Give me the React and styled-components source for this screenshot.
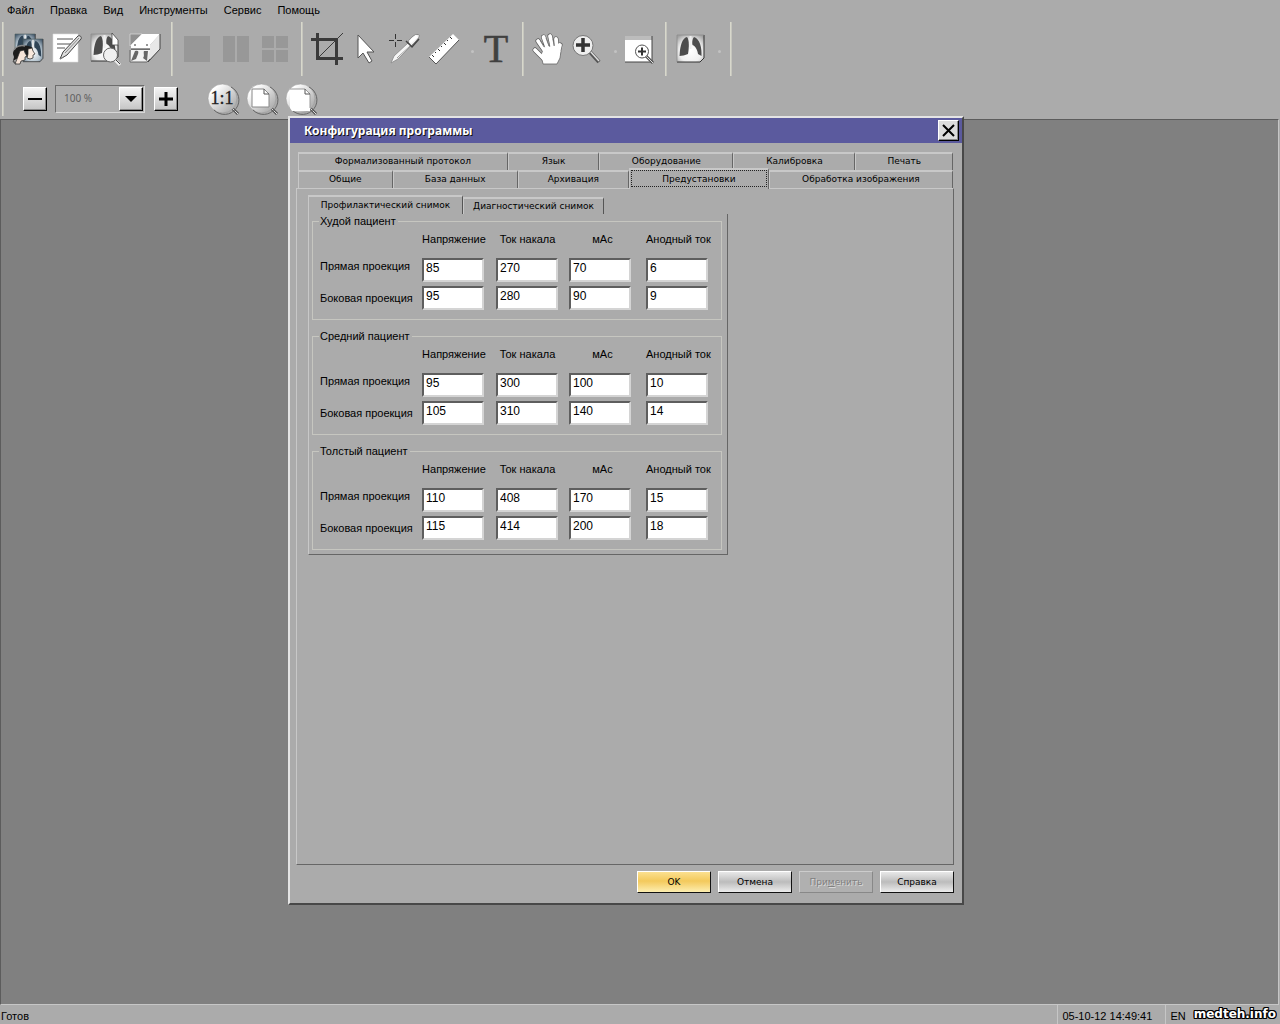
import React, { useState } from 'react';
import styled, { createGlobalStyle } from 'styled-components';

const GlobalStyle = createGlobalStyle`
  * {
    box-sizing: border-box;
  }

  body {
    margin: 0;
    background-color: #ababab;
    color: #000;
    font-family: 'Liberation Sans', Arial, sans-serif;
    font-size: 11px;
  }

  button, input, select {
    font: inherit;
    color: inherit;
  }
`;

// Styled components
const Window = styled.div`
  min-height: 100vh;
  display: flex;
  flex-direction: column;
`;

const MenuBar = styled.nav`
  display: flex;
  height: 20px;
  padding-left: 7px;
  gap: 16px;

  button {
    border: none;
    background: none;
    padding: 0;
    line-height: 20px;
  }
`;

const Toolbar = styled.div`
  display: flex;
  align-items: center;
  height: ${({ $small }) => ($small ? '41px' : '58px')};
`;

const Separator = styled.span`
  width: 2px;
  height: ${({ $small }) => ($small ? '34px' : '54px')};
  margin: 0 4px 0 7px;
  border-left: 1px solid #d8d8cc;
  border-right: 1px solid #c6c6be;

  &:first-child {
    margin-left: 2px;
  }
`;

const ToolButton = styled.button`
  display: flex;
  align-items: center;
  justify-content: center;
  width: 39px;
  height: 48px;
  padding: 0;
  border: none;
  background: none;

  svg {
    display: block;
    flex-shrink: 0;
    overflow: visible;
  }
`;

const DropMark = styled.button`
  width: 13px;
  height: 20px;
  padding: 0;
  border: none;
  background: none;

  &::before {
    content: '';
    display: block;
    width: 3px;
    height: 3px;
    margin: 4px 2px 0 auto;
    border-radius: 50%;
    background-color: #c2c2c2;
  }
`;

const ZoomControls = styled.div`
  display: flex;
  align-items: center;
  padding: 0 25px 0 15px;
  gap: 8px;
`;

const SquareButton = styled.button`
  display: flex;
  align-items: center;
  justify-content: center;
  width: 24px;
  height: 24px;
  padding: 0;
  border: 1px solid;
  border-color: #fff #000 #000 #fff;
  box-shadow: inset -1px -1px #8a8a8a;
  background: linear-gradient(#f4f4f4, #c4c4c4);
`;

const ZoomBox = styled.div`
  display: flex;
  width: 90px;
  height: 28px;
  margin-right: 1px;
  padding: 1px;
  border: 1px solid;
  border-color: #6c6c6c #d8d8d8 #d8d8d8 #6c6c6c;
  background-color: #b0b0b0;

  select {
    appearance: none;
    flex: 1;
    min-width: 0;
    padding: 0 0 2px 7px;
    border: none;
    background: none;
    color: #606060;
    font-family: 'Noto Sans', sans-serif;
    font-size: 10px;
  }
`;

const Workspace = styled.main`
  position: relative;
  flex: 1;
  min-height: 800px;
  margin-right: 1px;
  border: 1px solid;
  border-color: #5c5c5c #c6c6c6 #c6c6c6 #5c5c5c;
  background-color: #808080;
`;

const StatusBar = styled.footer`
  display: flex;
  height: 19px;
  padding-left: 1px;
  line-height: 22px;

  p {
    flex: 1;
    margin: 0;
  }

  span {
    padding: 0 4px;
    border-left: 1px solid #c6c6c6;
  }

  time {
    padding: 0 13px 0 4px;
    border-left: 1px solid #c6c6c6;
  }
`;

const SiteMark = styled.strong`
  padding: 0 4px;
  color: #fff;
  font-family: 'DejaVu Sans', sans-serif;
  font-size: 12px;
  line-height: 18px;
  text-shadow: 1px 0 #000, -1px 0 #000, 0 1px #000, 0 -1px #000, 1px 1px #000, -1px -1px #000, 1px -1px #000, -1px 1px #000;
`;

const Dialog = styled.section`
  position: absolute;
  top: -4px;
  left: 287px;
  width: 676px;
  border: 2px solid;
  border-color: #e4e4e4 #484848 #484848 #e4e4e4;
  background-color: #ababab;
  font-family: 'DejaVu Sans', Verdana, sans-serif;
`;

const TitleBar = styled.header`
  display: flex;
  align-items: center;
  justify-content: space-between;
  height: 25px;
  padding: 0 3px 0 14px;
  background-color: #5b5a9e;

  h1 {
    margin: 0;
    color: #fff;
    font-family: 'Noto Sans', Tahoma, sans-serif;
    font-size: 12px;
    line-height: 24px;
    text-shadow: 1px 1px #111;
  }
`;

const CloseButton = styled(SquareButton)`
  width: 21px;
  height: 21px;
  background: #dcdcdc;
`;

const DialogBody = styled.div`
  padding: 9px 8px 10px 6px;
`;

const TabRow = styled.div`
  display: flex;
  align-items: flex-end;
  height: 18px;
  margin: 0 1px 0 2px;
`;

const Tab = styled.button`
  position: relative;
  flex: ${({ $size }) => $size} 1 0;
  height: ${({ $active }) => ($active ? '21px' : '18px')};
  margin-bottom: ${({ $active }) => ($active ? '-1px' : '0')};
  padding: 0 0 2px;
  border: solid;
  border-width: 2px 1px 0 1px;
  border-color: #c8c8c8 #666 #c8c8c8 #c8c8c8;
  background-color: #ababab;
  font-size: 9px;
  line-height: 14px;
  white-space: nowrap;
  outline: ${({ $active }) => ($active ? '1px dotted #222' : 'none')};
  outline-offset: -3px;
`;

const TabPanel = styled.div`
  min-height: 677px;
  padding: 6px 11px;
  border: 1px solid;
  border-color: #c8c8c8 #666 #666 #c8c8c8;
`;

const SubTabRow = styled.div`
  display: flex;
  align-items: flex-end;
  height: 19px;
`;

const SubTab = styled.button`
  flex: 0 0 ${({ $active }) => ($active ? '155px' : '141px')};
  height: ${({ $active }) => ($active ? '19px' : '17px')};
  padding: 0;
  border: solid;
  border-width: 2px 1px 0 1px;
  border-color: #c8c8c8 #555 #c8c8c8 #c8c8c8;
  background: none;
  font-size: 9px;
  line-height: 15px;
  white-space: nowrap;
`;

const SubPanel = styled.div`
  display: flex;
  flex-direction: column;
  gap: 9px;
  width: 420px;
  padding: 0 5px 4px 3px;
  border: solid;
  border-width: 0 1px 1px 1px;
  border-color: #c8c8c8 #666 #666 #c8c8c8;
  font-family: 'Liberation Sans', Arial, sans-serif;
`;

const Group = styled.fieldset`
  min-width: 0;
  margin: 0;
  padding: 0 0 9px 6px;
  border: 1px solid #c6c6c0;

  legend {
    padding: 0 2px 0 1px;
    line-height: 14px;
  }

  table {
    table-layout: fixed;
    width: 392px;
    border-collapse: collapse;
  }

  th, td {
    padding: 0;
    font-weight: normal;
    white-space: nowrap;
  }

  thead th {
    height: 30px;
    padding: 4px 10px 0 0;
    line-height: 14px;
    vertical-align: top;
    text-align: center;
  }

  tbody tr {
    height: 28px;
    vertical-align: top;
  }

  tbody tr:last-child {
    height: 24px;
  }

  tbody th {
    padding-left: 1px;
    text-align: left;
    line-height: 16px;
  }

  tbody tr:last-child th {
    line-height: 24px;
  }
`;

const Col = styled.col`
  width: ${({ $width }) => $width}px;
`;

const NumberField = styled.input`
  display: block;
  width: 62px;
  height: 24px;
  padding: 0 2px 4px;
  border: 2px solid;
  border-color: #5e5e5e #d4d4d4 #d4d4d4 #5e5e5e;
  background-color: #fff;
  font-size: 12px;
`;

const Actions = styled.div`
  display: flex;
  justify-content: flex-end;
  gap: 7px;
  margin-top: 6px;
`;

const ActionButton = styled.button`
  width: 74px;
  height: 22px;
  padding: 0;
  border: 1px solid;
  border-color: #fff #111 #111 #fff;
  background: ${({ $primary }) =>
    $primary
      ? 'linear-gradient(#fbe08f, #f3c95c 45%, #fdeeb0)'
      : 'linear-gradient(#e8e8e8, #bcbcbc 50%, #ececec)'};
  font-size: 9px;
  line-height: 18px;

  &:disabled {
    border-color: #ccc #888 #888 #ccc;
    background: #b0b0b0;
    color: #808080;
    text-shadow: 1px 1px #d8d8d8;
  }
`;

// Icons
const Icon = ({ children }) => (
  <svg width="32" height="32" viewBox="0 0 32 32" fill="none" aria-hidden="true">
    {children}
  </svg>
);

const Lungs = ({ id, blue }) => (
  <>
    <defs>
      <radialGradient id={id} cy=".6" r=".7">
        <stop offset="0" stopColor="#fff" />
        <stop offset="0.6" stopColor={blue ? '#b4c3ce' : '#f0f0f0'} />
        <stop offset="1" stopColor={blue ? '#4c6072' : '#a2a2a2'} />
      </radialGradient>
    </defs>
    <path d="M0 0h27v23l-4 4H0z" fill={`url(#${id})`} />
    <path d="M27 0v23l-4 4H0" stroke="#333" />
    <path d="M0 27V0h27" stroke={blue ? '#455' : '#888'} strokeWidth=".7" />
    <path d="M10 2C6 3 4 8 3 15l-.5 6c2 0 6-1 8.500-2C12 13 12.500 5 10 2z" fill={blue ? '#2f4456' : '#4c4c4c'} />
    <path d="M17 2c-2 2-2 6-1.500 8 3 1 5 5 5.500 9l3.500 2C25 13 23 4 17 2z" fill={blue ? '#2f4456' : '#4c4c4c'} />
    <path d="M13.500 1v13" stroke="#eee" strokeWidth="2" />
  </>
);

const PatientsIcon = () => (
  <Icon>
    <g transform="translate(3 1) scale(.75 .8)"><Lungs id="patA" blue /></g>
    <g transform="translate(11 6) scale(.74 .84)"><Lungs id="patB" blue /></g>
    <path d="M1 21c0-5 4-8 9-8 4-1 8 0 11 2l-3 2-6 2-6 6-5 3 1-4z" fill="#1c1c1c" />
    <path d="M12 15c3-2 7-1 8 1l1 4-2 4-4 1z" fill="#1c1c1c" />
    <path d="M8 18l4-1 1 3 2 3-2 1v3l-4 1-1 3H3l2-5z" fill="#f6e4d8" stroke="#222" strokeWidth=".7" />
    <path d="M16 16l4-1 1 3 2 3-2 1v3l-3 1-3-1 1-4z" fill="#f8e8dc" stroke="#222" strokeWidth=".7" />
    <path d="M2 17c2-4 7-5 11-4" stroke="#888" strokeWidth="1.500" />
    <path d="M1 28l3 3" stroke="#555" strokeWidth="1.500" />
  </Icon>
);

const NoteIcon = () => (
  <Icon>
    <path d="M2 1h25v28H2z" fill="#fff" stroke="#ddd" strokeWidth=".6" />
    <path d="M6 6h16M6 11h14M6 15h8" stroke="#555" />
    <path d="M9 26l3-7L27 3c2-1 4 1 3 3L16 22z" fill="#ddd" stroke="#444" />
    <path d="M14 20L28 5M9 26l4-2" stroke="#888" />
  </Icon>
);

const XraySearchIcon = () => (
  <Icon>
    <g transform="translate(1 1)"><Lungs id="xrs" /></g>
    <path d="M22 0h7v12h-7z" fill="#ababab" />
    <path d="M22 0l6 7v5h-6z" fill="#fff" stroke="#444" strokeWidth=".8" />
    <path d="M25 27l5 5" stroke="#eee" strokeWidth="3" />
    <path d="M26 27l4 4" stroke="#444" />
    <circle cx="20.500" cy="22" r="7" fill="#f0f0f0" stroke="#666" />
  </Icon>
);

const PrinterIcon = () => (
  <Icon>
    <path d="M1 1h12L1 13z" fill="#909090" stroke="#ddd" strokeWidth=".7" />
    <path d="M2 12L13 1h18L21 12v4H2z" fill="#fff" />
    <path d="M21 12L31 1v15L18 29l1-12h2z" fill="#e8e8e8" />
    <path d="M31 1v15L19 29" stroke="#444" />
    <path d="M2 16h19M5 12h2m10 0h2" stroke="#333" />
    <path d="M2 17h19l-3 12H1z" fill="#f2f2f2" />
    <path d="M6 18c3-1 4 0 3 3l-2 5-5 2zm9 0h4l-1 10-4-3c2-2 0-5 1-7z" fill="#666" />
    <path d="M1 17v12h17l3-3" stroke="#666" />
  </Icon>
);

const LayoutOneIcon = () => (
  <Icon><path d="M3 3h26v26H3z" fill="#989898" /></Icon>
);

const LayoutTwoIcon = () => (
  <Icon><path d="M3 3h12v26H3zm14 0h12v26H17z" fill="#989898" /></Icon>
);

const LayoutFourIcon = () => (
  <Icon><path d="M3 3h12v12H3zm14 0h12v12H17zM3 17h12v12H3zm14 0h12v12H17z" fill="#989898" /></Icon>
);

const CropIcon = () => (
  <Icon>
    <path d="M0 6.500h25.500V32M6.500 0v25.500H32" stroke="#3a3a3a" strokeWidth="3" />
    <path d="M7 25L32 0" stroke="#3a3a3a" />
  </Icon>
);

const PointerIcon = () => (
  <Icon>
    <path d="M8 2v23l5-5 6 10 3-2-5-9h7z" fill="#fff" stroke="#555" />
  </Icon>
);

const DropperIcon = () => (
  <Icon>
    <path d="M0 7.500h5m3 0h5M6.500 1v5m0 3v5" stroke="#333" />
    <path d="M2 30l3-7L19 10l3 3L9 26z" fill="#f6f6f6" stroke="#888" strokeWidth=".8" />
    <path d="M19 9c3-5 7-8 10-7.500s1 4-7 11.500z" fill="#f0f0f0" stroke="#777" strokeWidth=".8" />
    <path d="M17 8l6 6 7-8" stroke="#444" strokeWidth="1.500" />
    <path d="M8 25l13-12" stroke="#999" />
    <path d="M21 9l7-6" stroke="#fff" strokeWidth="3" />
  </Icon>
);

const RulerIcon = () => (
  <Icon>
    <path d="M1 24L25 1l6 6L8 31z" fill="#fff" />
    <path d="M31 7L8 31l-7-7" stroke="#555" />
    <path d="M4 22l2 2m1-5l1 1m2-4l2 2m1-5l1 1m2-4l2 2m1-5l1 1m2-4l2 2" stroke="#333" />
  </Icon>
);

const TextIcon = () => (
  <Icon>
    <text x="16" y="29" textAnchor="middle" fontFamily="'Liberation Serif', serif" fontSize="40" fill="#404040" stroke="#404040" strokeWidth=".6">T</text>
  </Icon>
);

const handShape = 'M3 17l9 9M6 8l9 13M11.500 4l5 14M18 3l3 14M24 6l1 12M28 12l-3 12';

const HandIcon = () => (
  <Icon>
    <path d={handShape} stroke="#555" strokeWidth="5" strokeLinecap="round" />
    <path d="M9 22l3-8 13-2 4 6-1 7-3 6H11z" fill="#fff" stroke="#666" strokeWidth=".8" />
    <path d={handShape} stroke="#fff" strokeWidth="3.800" strokeLinecap="round" />
    <path d="M12 14L8.500 8M17 13l-3-8M22 13l-1-7" stroke="#777" strokeWidth=".8" />
  </Icon>
);

const ZoomInIcon = () => (
  <Icon>
    <path d="M19 19l9 10" stroke="#555" strokeWidth="4" />
    <path d="M19 18l9 10" stroke="#ddd" strokeWidth="1.500" />
    <circle cx="12" cy="12.500" r="10" fill="#eee" stroke="#777" />
    <path d="M5 12h14M12 5v14" stroke="#333" strokeWidth="3.500" />
  </Icon>
);

const WindowZoomIcon = () => (
  <Icon>
    <path d="M2 3h27v26H2z" fill="#fff" />
    <path d="M2 3h27v4H2z" fill="#bcbcbc" />
    <path d="M29 3v26H2" stroke="#444" />
    <path d="M23 23l7 7" stroke="#555" strokeWidth="3" />
    <path d="M23 23l7 7" stroke="#ddd" />
    <circle cx="19" cy="18.500" r="6.500" fill="#fff" stroke="#555" />
    <path d="M15 18.500h8m-4-4v8" stroke="#333" strokeWidth="2" />
  </Icon>
);

const XrayIcon = () => (
  <Icon><g transform="translate(2 2)"><Lungs id="xray" /></g></Icon>
);

const Lens = ({ id, children }) => (
  <Icon>
    <defs>
      <linearGradient id={id} x2="1" y2="1">
        <stop offset=".2" stopColor="#fff" />
        <stop offset=".8" stopColor="#b4b4b4" />
      </linearGradient>
    </defs>
    <path d="M25 25l6 6" stroke="#555" strokeWidth="3" />
    <path d="M25 25l6 6" stroke="#ddd" />
    <circle cx="15.500" cy="15.500" r="14.500" fill={`url(#${id})`} stroke="#999" strokeWidth=".6" />
    <path d="M24 4a14.500 14.500 0 1 1-17 23" stroke="#666" />
    {children}
  </Icon>
);

const ActualSizeIcon = () => (
  <Lens id="lensA">
    <text x="15" y="21" textAnchor="middle" fontFamily="'Liberation Serif', serif" fontSize="18" fill="#222" stroke="#222" strokeWidth=".3">1:1</text>
  </Lens>
);

const FitPageIcon = () => (
  <Lens id="lensB">
    <path d="M6 6h12l5 5v13H6z" fill="#fff" stroke="#888" />
    <path d="M18 6v5h5" stroke="#555" />
  </Lens>
);

const FitWidthIcon = () => (
  <Lens id="lensC">
    <path d="M5 6h15l5 5v17H7l-2-3z" fill="#fff" />
    <path d="M5 6h15l5 5v14" stroke="#999" />
    <path d="M20 6v5h5" stroke="#555" />
  </Lens>
);

// Data
const menuItems = ['Файл', 'Правка', 'Вид', 'Инструменты', 'Сервис', 'Помощь'];

const toolGroups = [
  [
    { label: 'Пациенты', icon: PatientsIcon },
    { label: 'Протокол', icon: NoteIcon },
    { label: 'Поиск снимка', icon: XraySearchIcon },
    { label: 'Печать', icon: PrinterIcon },
  ],
  [
    { label: 'Один снимок', icon: LayoutOneIcon, disabled: true },
    { label: 'Два снимка', icon: LayoutTwoIcon, disabled: true },
    { label: 'Четыре снимка', icon: LayoutFourIcon, disabled: true },
  ],
  [
    { label: 'Обрезка', icon: CropIcon },
    { label: 'Указатель', icon: PointerIcon },
    { label: 'Пипетка', icon: DropperIcon },
    { label: 'Линейка', icon: RulerIcon, menu: true },
    { label: 'Текст', icon: TextIcon },
  ],
  [
    { label: 'Рука', icon: HandIcon },
    { label: 'Увеличить', icon: ZoomInIcon, menu: true },
    { label: 'Увеличить область', icon: WindowZoomIcon },
  ],
  [{ label: 'Снимок', icon: XrayIcon, menu: true }],
];

const tabRows = [
  [
    { label: 'Формализованный протокол', size: 211 },
    { label: 'Язык', size: 91 },
    { label: 'Оборудование', size: 134 },
    { label: 'Калибровка', size: 122 },
    { label: 'Печать', size: 97 },
  ],
  [
    { label: 'Общие', size: 94 },
    { label: 'База данных', size: 125 },
    { label: 'Архивация', size: 111 },
    { label: 'Предустановки', size: 140 },
    { label: 'Обработка изображения', size: 185 },
  ],
];

const subTabs = ['Профилактический снимок', 'Диагностический снимок'];

const columns = ['Напряжение', 'Ток накала', 'мАс', 'Анодный ток'];

const presets = [
  { title: 'Худой пациент', front: [85, 270, 70, 6], side: [95, 280, 90, 9] },
  { title: 'Средний пациент', front: [95, 300, 100, 10], side: [105, 310, 140, 14] },
  { title: 'Толстый пациент', front: [110, 408, 170, 15], side: [115, 414, 200, 18] },
];

function PresetGroup({ title, front, side }) {
  const rows = [
    { label: 'Прямая проекция', values: front },
    { label: 'Боковая проекция', values: side },
  ];

  return (
    <Group>
      <legend>{title}</legend>
      <table>
        <colgroup>
          <Col $width={103} />
          <Col $width={74} />
          <Col $width={73} />
          <Col $width={77} />
          <Col $width={65} />
        </colgroup>
        <thead>
          <tr>
            <td />
            {columns.map(column => (
              <th key={column} scope="col">{column}</th>
            ))}
          </tr>
        </thead>
        <tbody>
          {rows.map(row => (
            <tr key={row.label}>
              <th scope="row">{row.label}</th>
              {row.values.map((value, i) => (
                <td key={columns[i]}>
                  <NumberField
                    type="text"
                    defaultValue={value}
                    aria-label={`${title}, ${row.label}, ${columns[i]}`}
                  />
                </td>
              ))}
            </tr>
          ))}
        </tbody>
      </table>
    </Group>
  );
}

function ConfigDialog() {
  const [activeTab, setActiveTab] = useState('Предустановки');
  const [activeSubTab, setActiveSubTab] = useState(subTabs[0]);

  return (
    <Dialog role="dialog" aria-labelledby="config-title">
      <TitleBar>
        <h1 id="config-title">Конфигурация программы</h1>
        <CloseButton aria-label="Закрыть">
          <svg width="13" height="13" viewBox="0 0 13 13" aria-hidden="true">
            <path d="M1 1l11 11M12 1L1 12" stroke="#000" strokeWidth="2" />
          </svg>
        </CloseButton>
      </TitleBar>

      <DialogBody>
        {tabRows.map((row, i) => (
          <TabRow key={i} role="tablist">
            {row.map(tab => (
              <Tab
                key={tab.label}
                role="tab"
                aria-selected={tab.label === activeTab}
                $size={tab.size}
                $active={tab.label === activeTab}
                onClick={() => setActiveTab(tab.label)}
              >
                {tab.label}
              </Tab>
            ))}
          </TabRow>
        ))}

        <TabPanel role="tabpanel">
          <SubTabRow role="tablist">
            {subTabs.map(label => (
              <SubTab
                key={label}
                role="tab"
                aria-selected={label === activeSubTab}
                $active={label === activeSubTab}
                onClick={() => setActiveSubTab(label)}
              >
                {label}
              </SubTab>
            ))}
          </SubTabRow>
          <SubPanel role="tabpanel">
            {presets.map(preset => (
              <PresetGroup key={preset.title} {...preset} />
            ))}
          </SubPanel>
        </TabPanel>

        <Actions>
          <ActionButton $primary>OK</ActionButton>
          <ActionButton>Отмена</ActionButton>
          <ActionButton disabled>При<u>м</u>енить</ActionButton>
          <ActionButton>Справка</ActionButton>
        </Actions>
      </DialogBody>
    </Dialog>
  );
}

function App() {
  return (
    <Window>
      <GlobalStyle />
      <MenuBar>
        {menuItems.map(item => (
          <button key={item}>{item}</button>
        ))}
      </MenuBar>

      <Toolbar>
        <Separator />
        {toolGroups.map((group, i) => (
          <React.Fragment key={i}>
            {group.map(({ label, icon: ToolIcon, disabled, menu }) => (
              <React.Fragment key={label}>
                <ToolButton aria-label={label} disabled={disabled}>
                  <ToolIcon />
                </ToolButton>
                {menu && <DropMark aria-label={`${label}: меню`} />}
              </React.Fragment>
            ))}
            <Separator />
          </React.Fragment>
        ))}
      </Toolbar>

      <Toolbar $small>
        <Separator $small />
        <ZoomControls>
          <SquareButton aria-label="Уменьшить">
            <svg width="14" height="14" aria-hidden="true"><path d="M0 7h14" stroke="#000" strokeWidth="2" /></svg>
          </SquareButton>
          <ZoomBox>
            <select aria-label="Масштаб" defaultValue="100">
              <option value="100">100 %</option>
              <option value="200">200 %</option>
            </select>
            <SquareButton as="span" aria-hidden="true">
              <svg width="12" height="6"><path d="M0 0h12L6 6z" fill="#000" /></svg>
            </SquareButton>
          </ZoomBox>
          <SquareButton aria-label="Увеличить">
            <svg width="14" height="14" aria-hidden="true"><path d="M0 7h14M7 0v14" stroke="#000" strokeWidth="3" /></svg>
          </SquareButton>
        </ZoomControls>
        <ToolButton aria-label="Реальный размер"><ActualSizeIcon /></ToolButton>
        <ToolButton aria-label="Страница целиком"><FitPageIcon /></ToolButton>
        <ToolButton aria-label="По ширине"><FitWidthIcon /></ToolButton>
      </Toolbar>

      <Workspace>
        <ConfigDialog />
      </Workspace>

      <StatusBar>
        <p>Готов</p>
        <time>05-10-12 14:49:41</time>
        <span>EN</span>
        <SiteMark>medteh.info</SiteMark>
      </StatusBar>
    </Window>
  );
}

export default App;
